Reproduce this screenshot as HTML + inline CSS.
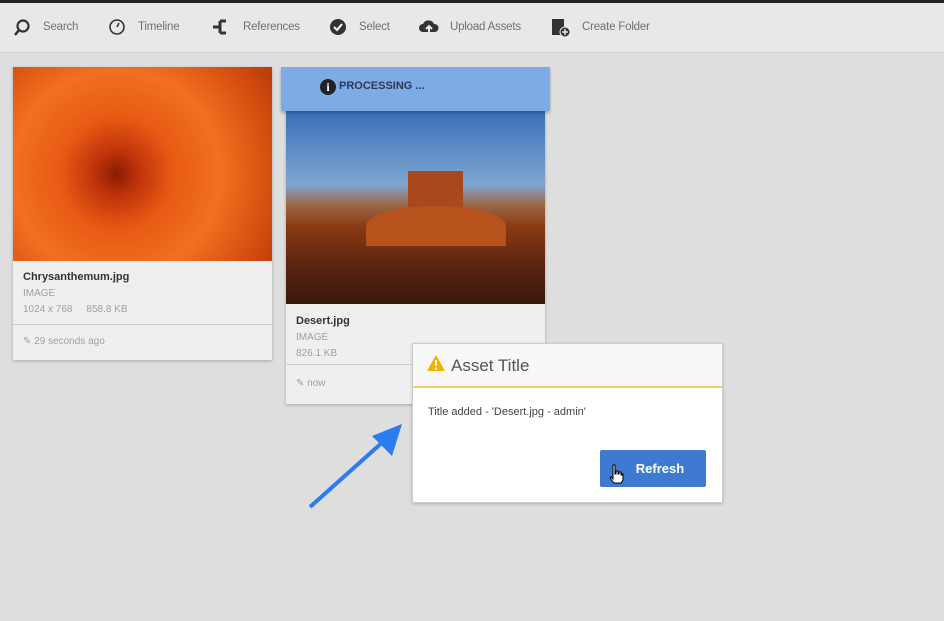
<!DOCTYPE html>
<html><head><style>
body{margin:0;width:944px;height:621px;background:#dedede;font-family:"Liberation Sans",sans-serif;position:relative;overflow:hidden}
.top{position:absolute;left:0;top:0;width:944px;height:3px;background:#222}
.bar{position:absolute;left:0;top:3px;width:944px;height:49px;background:#e8e8e8;border-bottom:1px solid #d4d4d4}
.it{position:absolute;top:18px;font-size:11.5px;color:#707070;letter-spacing:-0.2px}
.ic{position:absolute;top:15px}
.card{position:absolute;background:#efefef;box-shadow:0 1px 3px rgba(0,0,0,.25)}
.t{font-size:11px;font-weight:bold;color:#333}
.g{font-size:10px;color:#a0a0a0}
</style></head><body>
<div class="top"></div>
<div class="bar">
<svg class="ic" style="left:12px" width="20" height="20" viewBox="0 0 20 20"><circle cx="11" cy="8" r="5.5" fill="none" stroke="#333" stroke-width="2.2"/><path d="M7 12L3 17" stroke="#333" stroke-width="2.6"/></svg><span class="it" style="left:43px">Search</span>
<svg class="ic" style="left:107px" width="20" height="20" viewBox="0 0 20 20"><circle cx="10" cy="9" r="7" fill="none" stroke="#333" stroke-width="1.6"/><path d="M10 9L12 5" stroke="#333" stroke-width="1.6"/></svg><span class="it" style="left:138px">Timeline</span>
<svg class="ic" style="left:212px" width="22" height="20" viewBox="0 0 22 20"><path d="M1 9H8M8 3H14M8 15H14M8 3V15" stroke="#333" stroke-width="3" fill="none"/></svg><span class="it" style="left:243px">References</span>
<svg class="ic" style="left:328px" width="20" height="20" viewBox="0 0 20 20"><circle cx="10" cy="9" r="8" fill="#333"/><path d="M6 9l3 3 5-6" stroke="#fff" stroke-width="2" fill="none"/></svg><span class="it" style="left:359px">Select</span>
<svg class="ic" style="left:418px" width="22" height="20" viewBox="0 0 22 20"><path d="M5 14a4 4 0 0 1 0-8a6 6 0 0 1 11 0a4 4 0 0 1 1 8z" fill="#333"/><path d="M11 18V9M8 11l3-3 3 3" stroke="#e8e8e8" stroke-width="2" fill="none"/></svg><span class="it" style="left:450px">Upload Assets</span>
<svg class="ic" style="left:550px" width="22" height="20" viewBox="0 0 22 20"><rect x="2" y="1" width="12" height="16" fill="#333"/><circle cx="15" cy="14" r="5" fill="#333" stroke="#e8e8e8" stroke-width="1"/><path d="M15 11v6M12 14h6" stroke="#e8e8e8" stroke-width="1.5"/></svg><span class="it" style="left:582px">Create Folder</span>
</div>

<div class="card" style="left:13px;top:67px;width:259px;height:293px">
<div style="height:194px;background:radial-gradient(circle at 40% 55%,#8a1c05 0,#c0330a 12%,#e85a14 30%,#f07020 55%,#d85010 80%,#b83a08 100%)"></div>
<div style="padding:10px 10px 6px"><div class="t">Chrysanthemum.jpg</div><div class="g" style="margin-top:5px">IMAGE</div><div class="g" style="margin-top:5px">1024 x 768 &nbsp;&nbsp;&nbsp;&nbsp;858.8 KB</div></div>
<div style="position:absolute;top:257px;left:0;right:0;border-top:1px solid #ccc;padding:11px 10px" class="g">✎ 29 seconds ago</div>
</div>

<div class="card" style="left:286px;top:100px;width:259px;height:304px">
<div style="position:absolute;top:11px;left:0;width:259px;height:193px;background:linear-gradient(#3a6fb8 0,#7ea6d0 38%,#9a6a4a 48%,#8a3a14 60%,#5a2410 80%,#3a180c 100%)">
<div style="position:absolute;left:122px;top:60px;width:55px;height:40px;background:#a8481c"></div>
<div style="position:absolute;left:80px;top:95px;width:140px;height:40px;background:#b8521c;border-radius:50% 50% 0 0"></div>
</div>
<div style="position:absolute;top:215px;left:10px"><div class="t">Desert.jpg</div><div class="g" style="margin-top:5px">IMAGE</div><div class="g" style="margin-top:5px">826.1 KB</div></div>
<div style="position:absolute;top:264px;left:0;right:0;border-top:1px solid #ccc;padding:13px 10px" class="g">✎ now</div>
</div>
<div style="position:absolute;left:281px;top:67px;width:269px;height:44px;background:#7eaae6;box-shadow:0 2px 3px rgba(0,0,0,.25)">
<div style="position:absolute;left:39px;top:12px;width:16px;height:16px;border-radius:50%;background:#222;color:#fff;font-size:12px;font-weight:bold;text-align:center;line-height:16px;font-family:'Liberation Serif',serif">i</div>
<span style="position:absolute;left:58px;top:13px;font-size:11px;font-weight:bold;color:#2a3a50">PROCESSING ...</span></div>

<div style="position:absolute;left:412px;top:343px;width:309px;height:158px;background:#fff;border:1px solid #ccc;box-shadow:0 1px 3px rgba(0,0,0,.2)">
<div style="height:42px;background:#f8f8f8;border-bottom:2px solid #f0d060;position:relative">
<svg style="position:absolute;left:14px;top:11px" width="18" height="16" viewBox="0 0 18 16"><path d="M9 0L18 16H0z" fill="#f0b400"/><path d="M9 5v6M9 12.5v2" stroke="#fff" stroke-width="2"/></svg>
<span style="position:absolute;left:38px;top:12px;font-size:17px;color:#555">Asset Title</span></div>
<div style="position:absolute;left:15px;top:62px;font-size:11px;color:#444">Title added - 'Desert.jpg - admin'</div>
<div style="position:absolute;left:187px;top:106px;width:106px;height:37px;background:#3e7ad0;border-radius:2px;color:#fff;font-weight:bold;font-size:13px;line-height:37px;text-align:center;text-indent:14px">Refresh</div>
<svg style="position:absolute;left:195px;top:120px" width="16" height="20" viewBox="0 0 16 20"><path d="M5 1h2v9h1V7h2v3h1V8h2v3h1V10h1v6l-2 3H6l-4-5 1-1 2 2z" fill="#fff" stroke="#000" stroke-width="1"/></svg>
</div>

<svg style="position:absolute;left:0;top:0" width="944" height="621"><path d="M310 507L385 440" stroke="#2a7cf0" stroke-width="4"/><path d="M402 424L372 436L392 456z" fill="#2a7cf0"/></svg>
</body></html>
